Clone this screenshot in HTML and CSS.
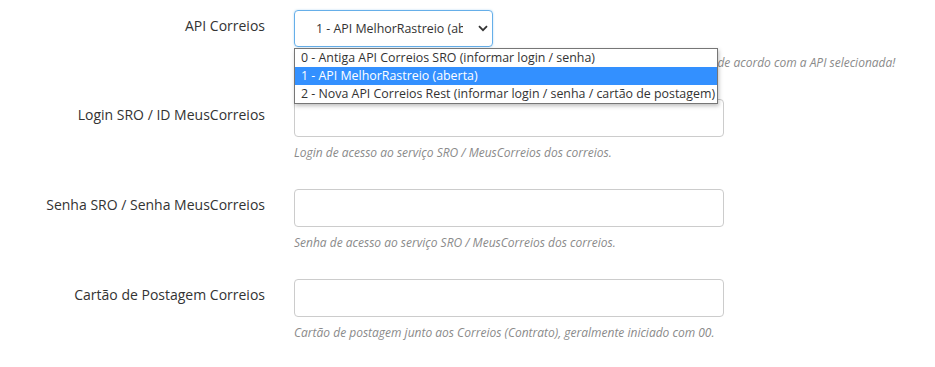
FILE: index.html
```
<!DOCTYPE html>
<html lang="pt-BR">
<head>
  <meta charset="UTF-8" />
  <title>Configurações Correios</title>
  <link rel="stylesheet" href="styles.css">
</head>
<body>
  <form class="form">
    <div class="form-group">
      <label class="form-label">API Correios</label>
      <div class="form-control-wrap">
        <div class="select-box">
          <span class="select-value">1 - API MelhorRastreio (aberta)</span>
          <svg class="select-arrow" width="10" height="7" viewBox="0 0 10 7"><path d="M1 1.2 L5 5.2 L9 1.2" fill="none" stroke="#333" stroke-width="1.8"/></svg>
        </div>
        <ul class="select-list">
          <li>0 - Antiga API Correios SRO (informar login / senha)</li>
          <li class="selected">1 - API MelhorRastreio (aberta)</li>
          <li>2 - Nova API Correios Rest (informar login / senha / cartão de postagem)</li>
        </ul>
        <p class="help">Escolha a API utilizada para rastreio. Os campos abaixo devem ser preenchidos de acordo com a API selecionada!</p>
      </div>
    </div>

    <div class="form-group">
      <label class="form-label">Login SRO / ID MeusCorreios</label>
      <div class="form-control-wrap">
        <input class="input" type="text">
        <p class="help">Login de acesso ao serviço SRO / MeusCorreios dos correios.</p>
      </div>
    </div>

    <div class="form-group">
      <label class="form-label">Senha SRO / Senha MeusCorreios</label>
      <div class="form-control-wrap">
        <input class="input" type="password">
        <p class="help">Senha de acesso ao serviço SRO / MeusCorreios dos correios.</p>
      </div>
    </div>

    <div class="form-group">
      <label class="form-label">Cartão de Postagem Correios</label>
      <div class="form-control-wrap">
        <input class="input" type="text">
        <p class="help">Cartão de postagem junto aos Correios (Contrato), geralmente iniciado com 00.</p>
      </div>
    </div>
  </form>
</body>
</html>
```

FILE: styles.css
```
* {
  margin: 0;
  padding: 0;
  box-sizing: border-box;
}

html, body {
  height: 100%;
  font-family: "Open Sans", sans-serif;
  background-color: #fff;
  color: #333;
  overflow: hidden;
}

.form {
  padding-top: 10px;
}

.form-group {
  display: grid;
  grid-template-columns: 265px 430px;
  column-gap: 29px;
  margin-bottom: 28px;
}

.form-label {
  text-align: right;
  font-size: 14px;
  line-height: 20px;
  padding-top: 6px;
  color: #333;
}

.form-control-wrap {
  position: relative;
}

.select-box {
  width: 199px;
  height: 37px;
  border: 1px solid #66afe9;
  border-radius: 4px;
  box-shadow: 0 0 2px rgba(102, 175, 233, 0.5);
  display: flex;
  align-items: center;
  padding: 0 4px 0 21px;
  font-size: 12.4px;
}

.select-value {
  width: 147px;
  overflow: hidden;
  white-space: nowrap;
}

.select-arrow {
  margin-left: auto;
}

.select-list {
  position: absolute;
  top: 38px;
  left: 0;
  width: 424px;
  list-style: none;
  background: #fff;
  border: 1px solid #767676;
  box-shadow: 1px 2px 4px rgba(0, 0, 0, 0.25);
  font-size: 12.4px;
  z-index: 2;
}

.select-list li {
  height: 18px;
  line-height: 18px;
  padding-left: 6px;
  white-space: nowrap;
}

.select-list li.selected {
  background: #3390ff;
  color: #fff;
}

.input {
  display: block;
  width: 430px;
  height: 38px;
  border: 1px solid #ccc;
  border-radius: 4px;
}

.help {
  margin-top: 7px;
  font-size: 12px;
  line-height: 17px;
  font-style: italic;
  color: #8a8a8a;
  white-space: nowrap;
}
```
